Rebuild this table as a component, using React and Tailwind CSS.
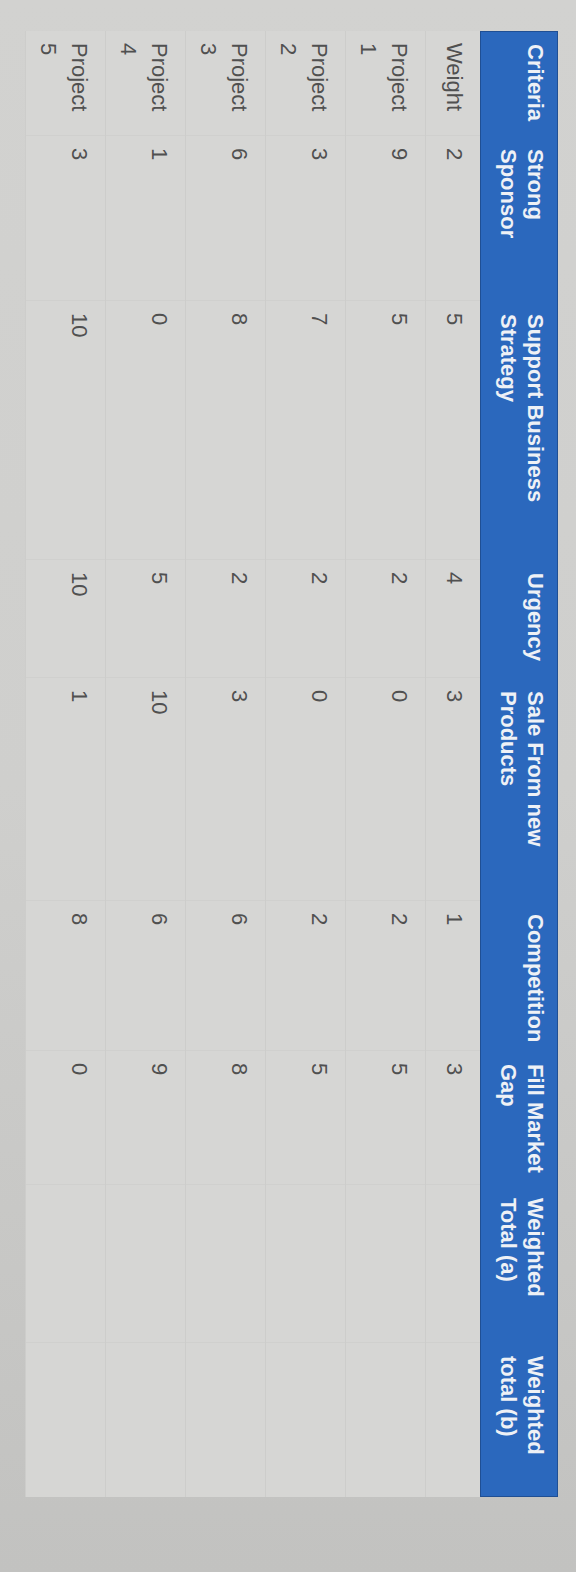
const headers = [
  ['Criteria'],
  ['Strong', 'Sponsor'],
  ['Support Business', 'Strategy'],
  ['Urgency'],
  ['Sale From new', 'Products'],
  ['Competition'],
  ['Fill Market', 'Gap'],
  ['Weighted', 'Total (a)'],
  ['Weighted', 'total (b)'],
];

const rows = [
  { name: 'Weight', values: [2, 5, 4, 3, 1, 3, '', ''], tall: false },
  { name: 'Project 1', values: [9, 5, 2, 0, 2, 5, '', ''], tall: true },
  { name: 'Project 2', values: [3, 7, 2, 0, 2, 5, '', ''], tall: true },
  { name: 'Project 3', values: [6, 8, 2, 3, 6, 8, '', ''], tall: true },
  { name: 'Project 4', values: [1, 0, 5, 10, 6, 9, '', ''], tall: true },
  { name: 'Project 5', values: [3, 10, 10, 1, 8, 0, '', ''], tall: true },
];

const gridCols =
  'grid grid-cols-[105px_165px_259px_118px_223px_150px_134px_158px_154px]';

function HeaderRow() {
  return (
    <div className={`${gridCols} h-[78px] bg-[#2b68bd] border border-[#1f4f94]`}>
      {headers.map((lines, i) => (
        <div key={i} className="px-3 pt-2 text-[22px] leading-[27px] font-bold text-[#eef1f6] whitespace-nowrap">
          {lines.map((l) => (
            <div key={l}>{l}</div>
          ))}
        </div>
      ))}
    </div>
  );
}

function BodyRow({ row }) {
  const cells = [row.name, ...row.values];
  return (
    <div className={`${gridCols} ${row.tall ? 'h-[80px]' : 'h-[55px]'} border-b border-[#cdcdcb]`}>
      {cells.map((c, i) => (
        <div
          key={i}
          className="px-3 pt-[10px] text-[22px] leading-[31px] text-[#505050] border-r border-[#d0d0ce] last:border-r-0"
        >
          {c}
        </div>
      ))}
    </div>
  );
}

export default function App() {
  return (
    <div
      className="relative w-[576px] h-[1572px] overflow-hidden bg-gradient-to-b from-[#d2d2d0] via-[#cfcfcd] to-[#c2c2c0]"
      style={{ fontFamily: '"Liberation Sans", Arial, sans-serif' }}
    >
      {/* table is laid out landscape and turned a quarter clockwise */}
      <div className="w-[1572px] h-[576px] pl-[31px] pt-[18px] origin-top-left rotate-90 translate-x-[576px]">
        <div className="w-[1466px]">
          <HeaderRow />
          <div className="bg-[#d6d6d4]">
            {rows.map((r) => (
              <BodyRow key={r.name} row={r} />
            ))}
          </div>
        </div>
      </div>
    </div>
  );
}
